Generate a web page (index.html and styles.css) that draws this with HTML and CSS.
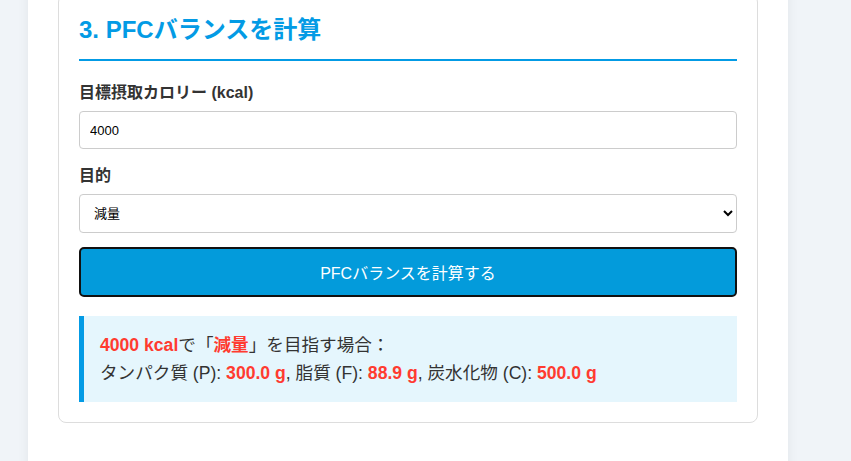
FILE: index.html
```html
<html>
    <head>
        <title>PFCバランス計算</title>
        <link rel="stylesheet" href="styles.css">
    </head>
    <body>
        <div class="container">
            <div class="card">
                <h2>3. PFCバランスを計算</h2>
                <div class="form-group">
                    <label for="kcal">目標摂取カロリー (kcal)</label>
                    <input type="number" id="kcal" value="4000">
                </div>
                <div class="form-group">
                    <label for="goal">目的</label>
                    <select id="goal">
                        <option value="cut">減量</option>
                        <option value="keep">維持</option>
                        <option value="bulk">増量</option>
                    </select>
                </div>
                <button class="calc-btn" onclick="calcPfc()">PFCバランスを計算する</button>
                <div class="result" id="result">
                    <span class="hl">4000 kcal</span>で「<span class="hl">減量</span>」を目指す場合：<br>
                    タンパク質 (P): <span class="hl">300.0 g</span>, 脂質 (F): <span class="hl">88.9 g</span>, 炭水化物 (C): <span class="hl">500.0 g</span>
                </div>
            </div>
        </div>
        <script>
        function calcPfc() {
            let kcal = Number(document.getElementById('kcal').value);
            let goal = document.getElementById('goal');
            let name = goal.options[goal.selectedIndex].text;
            // P 30% / F 20% / C 50%
            let p = (kcal * 0.3 / 4).toFixed(1);
            let f = (kcal * 0.2 / 9).toFixed(1);
            let c = (kcal * 0.5 / 4).toFixed(1);
            document.getElementById('result').innerHTML =
                `<span class="hl">${kcal} kcal</span>で「<span class="hl">${name}</span>」を目指す場合：<br>` +
                `タンパク質 (P): <span class="hl">${p} g</span>, 脂質 (F): <span class="hl">${f} g</span>, 炭水化物 (C): <span class="hl">${c} g</span>`;
        }
        </script>
    </body>
</html>
```

FILE: styles.css
```css
body {
        margin: 0;
        background: #f0f4f8;
        font-family: "Liberation Sans", "Noto Sans CJK JP", sans-serif;
        color: #333;}

.container {
        width: 760px;
        margin: -36px 0 0 28px;
        padding: 30px 30px 60px;
        box-sizing: border-box;
        background: #fff;
        box-shadow: 0 0 12px rgba(0, 0, 0, 0.06);}

.card {
        border: 1px solid #ddd;
        border-radius: 8px;
        padding: 20px;}

.card h2 {
        margin: 0 0 22px;
        font-size: 24px;
        line-height: 30px;
        color: #039be5;
        padding-bottom: 14px;
        border-bottom: 2px solid #039be5;}

.form-group {margin-bottom: 17px;}

.form-group label {
        display: block;
        font-size: 16px;
        font-weight: bold;
        line-height: 20px;
        margin-bottom: 8px;}

.form-group input,
.form-group select {
        width: 100%;
        box-sizing: border-box;
        border: 1px solid #ccc;
        border-radius: 4px;
        padding: 0 10px;
        font-family: "Liberation Sans", "Noto Sans CJK JP", sans-serif;
        font-size: 13px;
        background: #fff;
        color: #000;}

.form-group input {height: 38px;}

.form-group select {height: 39px;}

.calc-btn {
        display: block;
        width: 100%;
        height: 50px;
        margin-top: -3px;
        background: #039bdb;
        color: #fff;
        border: 2px solid #111;
        border-radius: 5px;
        font-family: "Liberation Sans", "Noto Sans CJK JP", sans-serif;
        font-size: 16px;}

.result {
        margin-top: 19px;
        background: #e5f6fd;
        border-left: 5px solid #039be5;
        padding: 15px 16px;
        font-size: 17.6px;
        line-height: 28px;}

.hl {
        color: #ff3b30;
        font-weight: bold;}
```
